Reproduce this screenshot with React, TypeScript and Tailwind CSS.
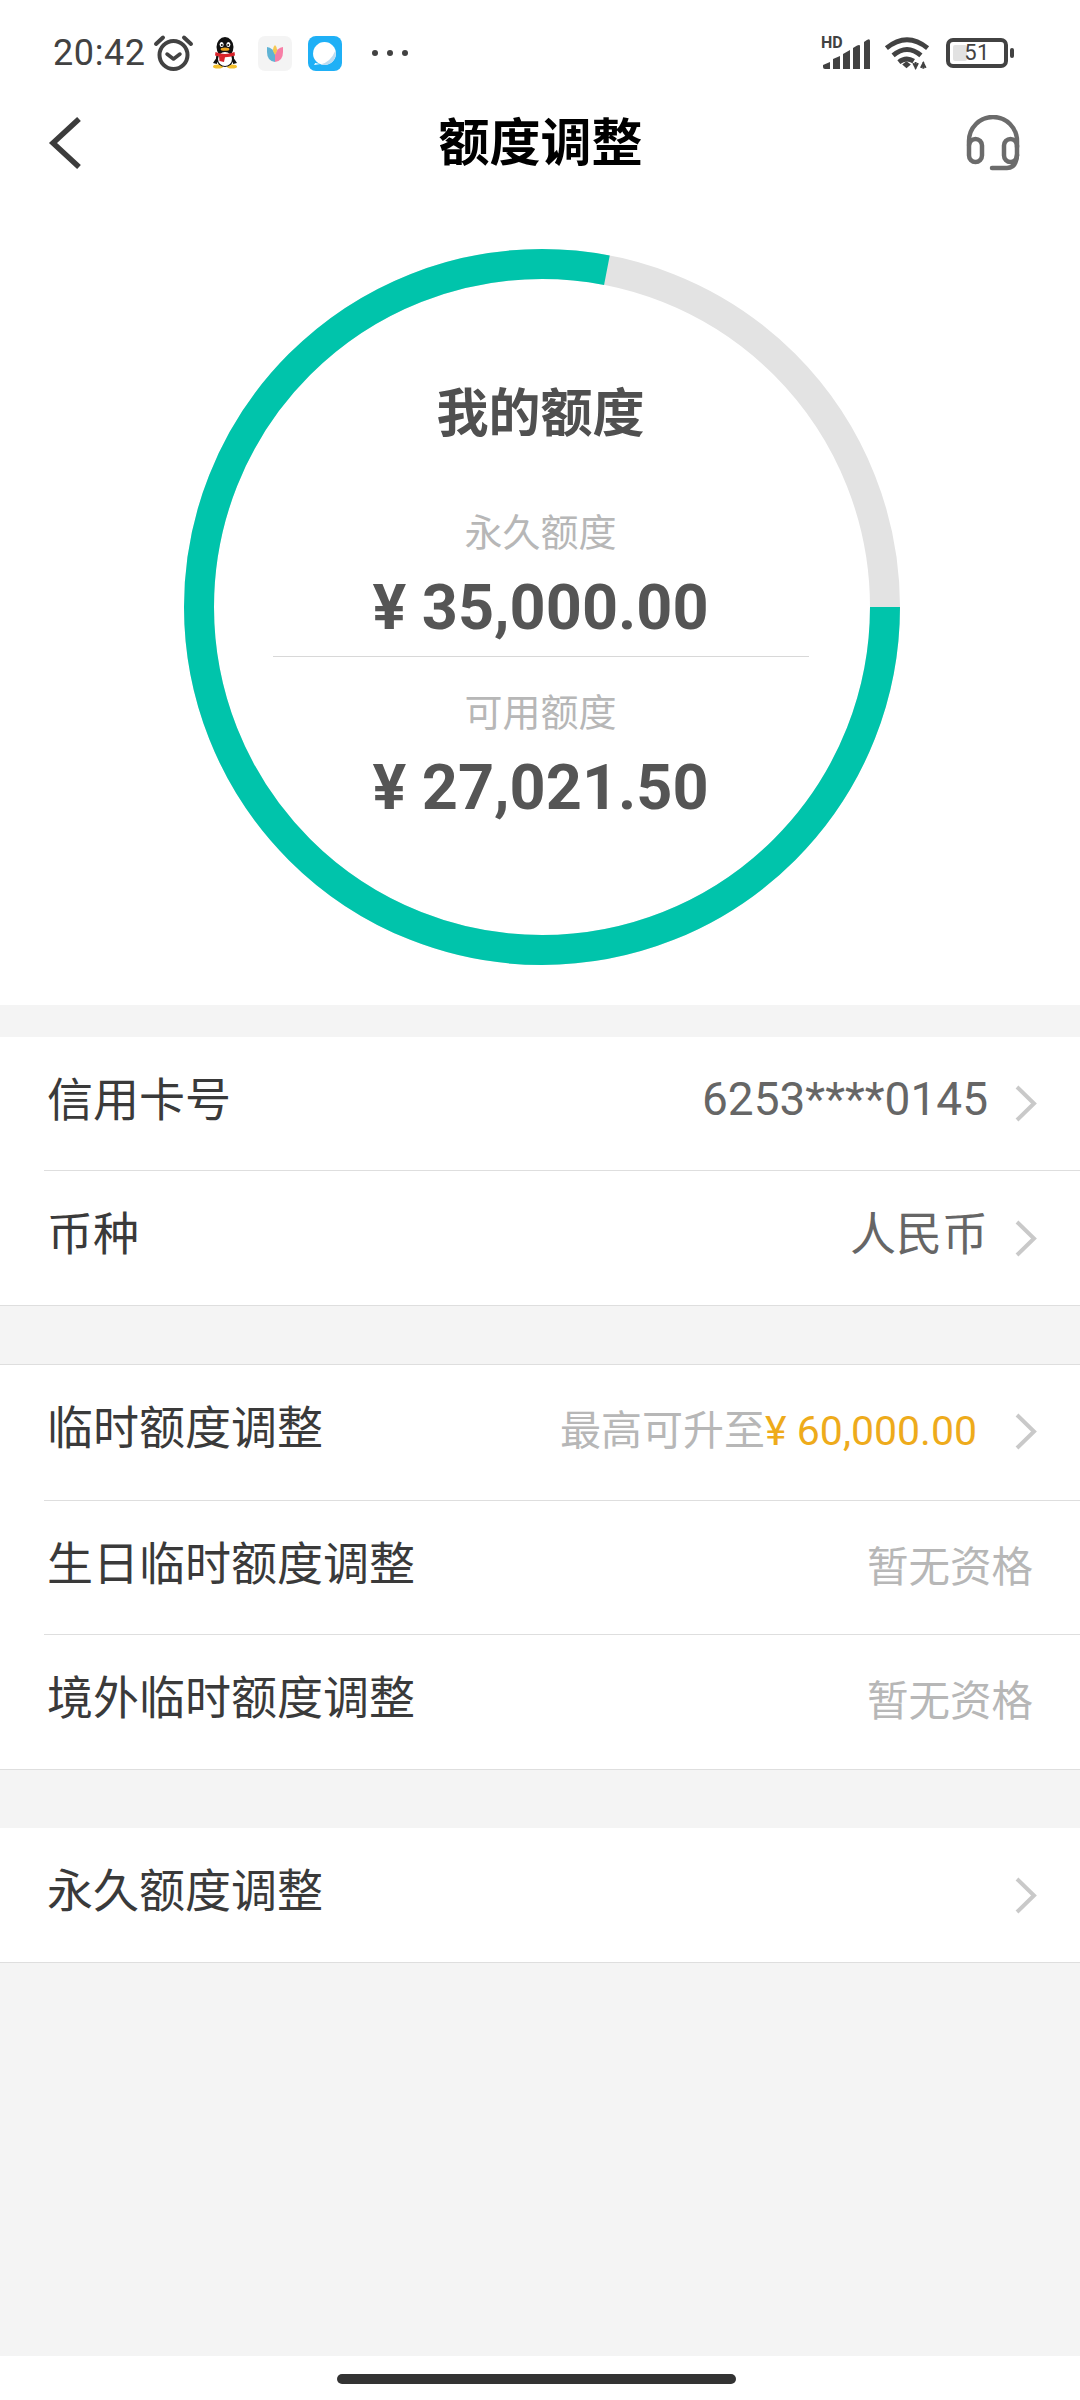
const FONT = "font-['Roboto','Noto_Sans_CJK_SC',sans-serif]"

function Chevron() {
  return (
    <svg width="23" height="37" viewBox="0 0 23 37" fill="none" stroke="#c9c9c9" strokeWidth="4" className="shrink-0">
      <polyline points="3,2 20,18.5 3,35" />
    </svg>
  )
}

function Alarm() {
  return (
    <svg width="41" height="38" viewBox="0 0 41 38" fill="none" stroke="#424242" strokeLinecap="round">
      <circle cx="20.5" cy="21" r="14" strokeWidth="4" />
      <polyline points="14,20 20.5,25 27,20" strokeWidth="3.5" strokeLinejoin="round" />
      <path d="M3 10 L10 3.5" strokeWidth="4" />
      <path d="M38 10 L31 3.5" strokeWidth="4" />
    </svg>
  )
}

function Penguin() {
  return (
    <svg width="26" height="32" viewBox="0 0 26 32">
      <ellipse cx="6" cy="29.5" rx="5" ry="2" fill="#f5c02c" />
      <ellipse cx="20" cy="29.5" rx="5" ry="2" fill="#f5c02c" />
      <path d="M5 20 L1 26 L5 27 Z" fill="#111" />
      <path d="M21 20 L25 26 L21 27 Z" fill="#111" />
      <ellipse cx="13" cy="10" rx="8.5" ry="10" fill="#111" />
      <ellipse cx="13" cy="21" rx="9" ry="9" fill="#111" />
      <ellipse cx="13" cy="22" rx="7" ry="7" fill="#fff" />
      <ellipse cx="9.6" cy="7.5" rx="2" ry="2.6" fill="#fff" />
      <ellipse cx="16.4" cy="7.5" rx="2" ry="2.6" fill="#fff" />
      <circle cx="9.8" cy="8" r="1" fill="#111" />
      <circle cx="16.2" cy="8" r="1" fill="#111" />
      <ellipse cx="13" cy="12.2" rx="4.4" ry="1.6" fill="#f0a81e" />
      <path d="M3.5 15 Q13 19 22.5 15 L23 18.5 Q13 22 3 18.5 Z" fill="#d8232a" />
      <path d="M7 19 L13 20 L12 25 L7.5 24 Z" fill="#d8232a" />
    </svg>
  )
}

function TulipTile() {
  return (
    <div className="w-[34px] h-[35px] rounded-[7px] bg-[#f4f4f4] flex items-center justify-center">
      <svg width="18" height="19" viewBox="0 0 18 19">
        <path d="M1 3 Q7 4 9 10 L9 18 Q1 17 1 8 Z" fill="#5fb3d4" />
        <path d="M17 3 Q11 4 9 10 L9 18 Q17 17 17 8 Z" fill="#f77fa6" />
        <path d="M9 1 Q13 5 9 11 Q5 5 9 1 Z" fill="#f6c850" />
      </svg>
    </div>
  )
}

function BubbleTile() {
  return (
    <div className="w-[34px] h-[35px] rounded-[8px] bg-[#1fb0f6] flex items-center justify-center">
      <svg width="25" height="25" viewBox="0 0 24 24">
        <circle cx="12" cy="12" r="11" fill="#fff" />
        <path d="M3 21 L2 23 L8 22 Z" fill="#fff" />
        <path d="M22.5 9 A11 11 0 0 1 12 23 L8 22.5 Q18 20 22.5 9 Z" fill="#bcdcf2" />
      </svg>
    </div>
  )
}

function Signal() {
  return (
    <div className="relative w-[48px] h-[30px] mt-[1px]">
      <span className="absolute left-[-2px] top-[-4px] text-[16px] leading-[16px] font-bold text-[#424242]">HD</span>
      <svg width="48" height="30" viewBox="0 0 48 30" fill="#424242" className="absolute inset-0">
        <path d="M0 26 L7 23 L7 30 L2 30 Q0 30 0 28 Z" />
        <path d="M10 20 L17 17 L17 30 L10 30 Z" />
        <path d="M20 15 L27 11 L27 30 L20 30 Z" />
        <path d="M30 9 Q37 4 37 7 L37 30 L30 30 Z" />
        <path d="M41 3 Q47 -2 47 2 L47 30 L41 30 Z" />
      </svg>
    </div>
  )
}

function Wifi() {
  return (
    <svg width="46" height="34" viewBox="0 0 48 35" fill="none" stroke="#424242" strokeWidth="5">
      <path d="M2.5 12.5 Q24 -5 45.5 12.5" />
      <path d="M9.5 20 Q24 7.5 38.5 20" />
      <path d="M15.5 27 Q23 21 31 26" />
      <path d="M19 29.5 L23.5 26 L28 29.5 L23.5 33.5 Z" fill="#424242" stroke="none" />
      <path d="M33 27 L33 34 M30.5 28 L33 33 L35.5 28" strokeWidth="2" />
      <path d="M41 34 L41 27 M38.5 33 L41 28 L43.5 33" strokeWidth="2" />
    </svg>
  )
}

function Battery() {
  return (
    <div className="flex items-center gap-[2px]">
      <div className="relative w-[62px] h-[30px] rounded-[7px] border-[4px] border-[#424242] flex items-center justify-center">
        <div className="absolute left-[3px] top-[3px] bottom-[3px] w-[14px] rounded-[2px] bg-[#e2e2e2]" />
        <span className="relative text-[22px] leading-none text-[#424242] tracking-[0.5px]">51</span>
      </div>
      <div className="w-[4px] h-[10px] rounded-[2px] bg-[#424242]" />
    </div>
  )
}

function StatusBar() {
  return (
    <div className="h-[106px] shrink-0 flex items-center justify-between pl-[53px] pr-[66px]">
      <div className="flex items-center">
        <span className="text-[36px] leading-none text-[#424242] tracking-[0.6px]">20:42</span>
        <div className="ml-[7px] mr-[18px] flex"><Alarm /></div>
        <Penguin />
        <div className="ml-[20px] mr-[16px]"><TulipTile /></div>
        <BubbleTile />
        <div className="ml-[30px] flex gap-[9px]">
          <span className="w-[6px] h-[6px] rounded-full bg-[#424242]" />
          <span className="w-[6px] h-[6px] rounded-full bg-[#424242]" />
          <span className="w-[6px] h-[6px] rounded-full bg-[#424242]" />
        </div>
      </div>
      <div className="flex items-center">
        <Signal />
        <div className="ml-[13px] mr-[16px] flex"><Wifi /></div>
        <Battery />
      </div>
    </div>
  )
}

function Header() {
  return (
    <div className="h-[74px] shrink-0 flex items-center justify-between pl-[48px] pr-[60px]">
      <svg width="34" height="52" viewBox="0 0 34 52" fill="none" stroke="#3c3c3c" strokeWidth="5.5">
        <polyline points="31,2 5,26 31,50" />
      </svg>
      <h1 className="text-[51px] leading-none font-bold text-black ml-[33px]">额度调整</h1>
      <svg width="54" height="56" viewBox="0 0 54 56" fill="none" stroke="#6b6b6b" strokeWidth="4.5" strokeLinecap="round">
        <path d="M3 30 L3 26 A24 24 0 0 1 51 26 L51 32" />
        <rect x="3" y="24" width="13" height="23" rx="6.5" />
        <rect x="38" y="24" width="13" height="23" rx="6.5" />
        <path d="M51 40 Q50 53 41 53 L26 53" />
      </svg>
    </div>
  )
}

function QuotaRing() {
  const r = 343
  const c = 2 * Math.PI * r
  const used = 0.78
  return (
    <div className="relative w-[716px] h-[716px] ml-[184px] mt-[69px] mb-[40px] pr-[3px] shrink-0 flex flex-col items-center">
      <svg width="716" height="716" viewBox="0 0 716 716" fill="none" className="absolute inset-0">
        <circle cx="358" cy="358" r={r} stroke="#e3e3e3" strokeWidth="30" />
        <circle
          cx="358"
          cy="358"
          r={r}
          stroke="#00c4ab"
          strokeWidth="30"
          strokeDasharray={`${c * used} ${c}`}
        />
      </svg>
      <div className="relative mt-[134px] text-[52px] leading-[64px] font-bold text-[#505050]">我的额度</div>
      <div className="relative mt-[63px] text-[38px] leading-[46px] text-[#b7b7b7]">永久额度</div>
      <div className="relative mt-[15px] text-[63px] leading-[74px] font-bold text-[#555555]">¥ 35,000.00</div>
      <div className="relative mt-[11px] w-[536px] h-[1px] bg-[#d8d8d8]" />
      <div className="relative mt-[33px] text-[38px] leading-[46px] text-[#b7b7b7]">可用额度</div>
      <div className="relative mt-[15px] text-[63px] leading-[74px] font-bold text-[#555555]">¥ 27,021.50</div>
    </div>
  )
}

type RowProps = {
  label: string
  children?: React.ReactNode
  arrow?: boolean
  last?: boolean
  tall?: boolean
}

function Row({ label, children, arrow, last, tall }: RowProps) {
  return (
    <div className={`ml-[44px] flex items-center justify-between pl-[3px] ${tall ? 'h-[136px] pb-[2px]' : 'h-[134px]'} ${last ? '' : 'border-b border-[#dedede]'}`}>
      <span className="text-[46px] leading-none text-[#3a3a3a] pb-[8px]">{label}</span>
      <div className={`flex items-center ${arrow ? 'pr-[43px]' : 'pr-[47px]'}`}>
        {children}
        {arrow && <Chevron />}
      </div>
    </div>
  )
}

function App() {
  return (
    <div className={`w-[1080px] h-[2400px] bg-white flex flex-col overflow-hidden ${FONT}`}>
      <StatusBar />
      <Header />
      <QuotaRing />

      <div className="flex-1 bg-[#f4f4f4] pt-[32px] flex flex-col">
        <div className="bg-white border-b border-[#dedede]">
          <Row label="信用卡号" arrow>
            <span className="text-[46px] leading-none text-[#666666] mr-[26px] pb-[10px]">6253****0145</span>
          </Row>
          <Row label="币种" arrow last>
            <span className="text-[46px] leading-none text-[#666666] mr-[26px] pb-[8px]">人民币</span>
          </Row>
        </div>

        <div className="mt-[58px] bg-white border-y border-[#dedede]">
          <Row label="临时额度调整" arrow tall>
            <span className="text-[41px] leading-none text-[#b7b7b7] mr-[37px]">
              最高可升至<span className="text-[#eeab1b]">¥ 60,000.00</span>
            </span>
          </Row>
          <Row label="生日临时额度调整">
            <span className="text-[41.5px] leading-none text-[#b7b7b7]">暂无资格</span>
          </Row>
          <Row label="境外临时额度调整" last>
            <span className="text-[41.5px] leading-none text-[#b7b7b7]">暂无资格</span>
          </Row>
        </div>

        <div className="mt-[58px] bg-white border-b border-[#dedede]">
          <Row label="永久额度调整" arrow last />
        </div>
      </div>

      <div className="h-[44px] shrink-0 flex justify-center pt-[18px] pr-[7px]">
        <div className="w-[399px] h-[10px] rounded-full bg-[#333333]" />
      </div>
    </div>
  )
}

export default App
